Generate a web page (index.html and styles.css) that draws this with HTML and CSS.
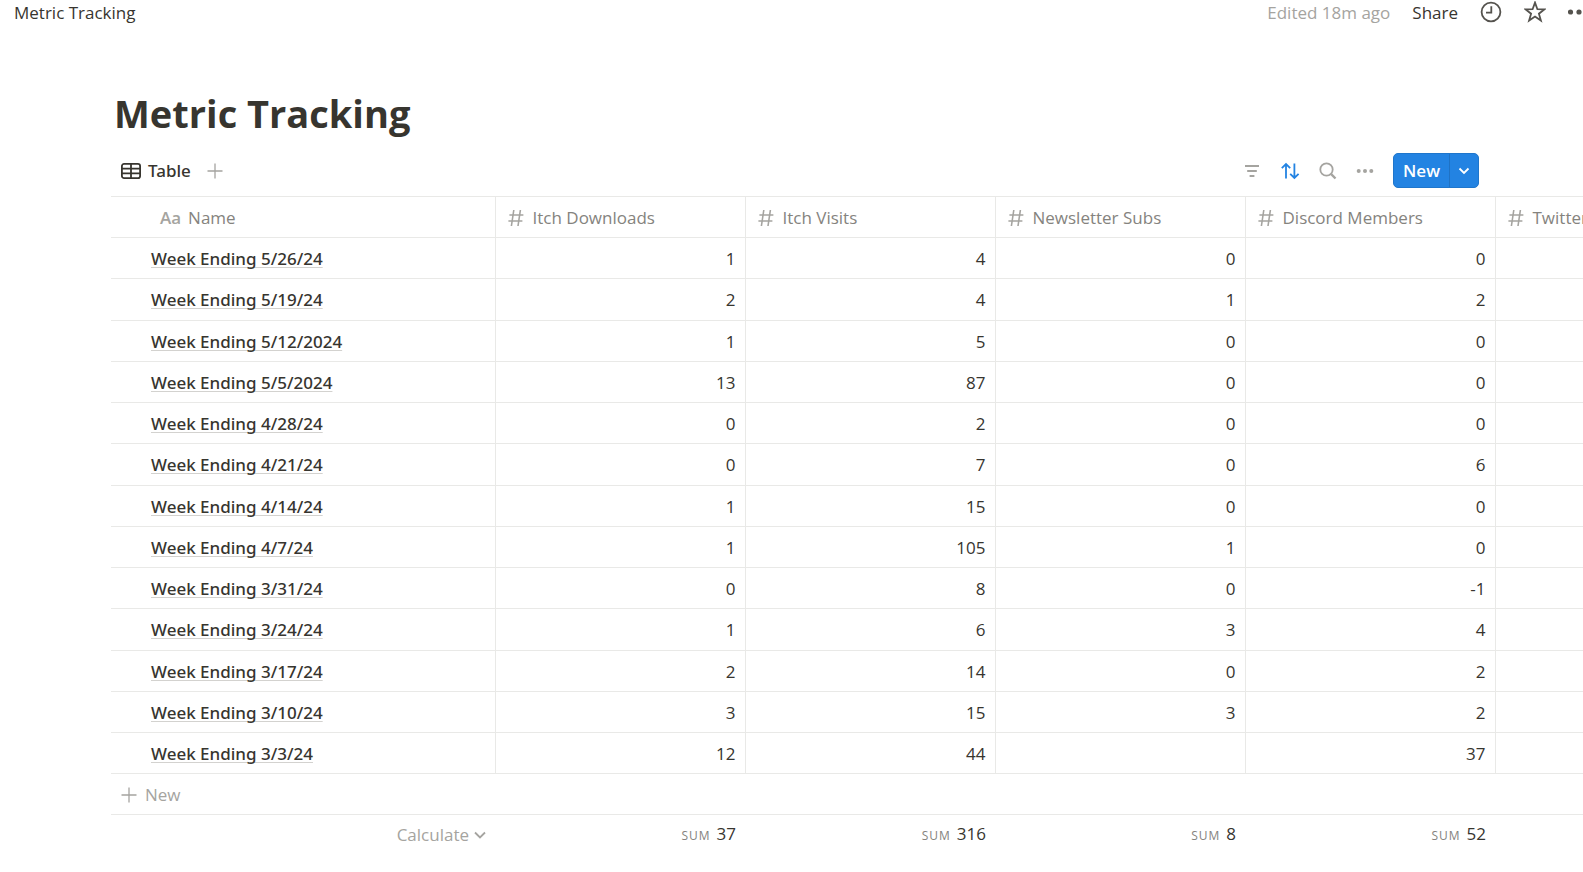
FILE: index.html
```html
<!DOCTYPE html>
<html lang="en">
<head>
    <meta charset="UTF-8">
    <meta name="viewport" content="width=device-width, initial-scale=1.0">
    <title>Metric Tracking</title>
    <link rel="stylesheet" href="styles.css">
</head>
<body>

    <header class="topbar">
        <a class="breadcrumb" href="#">Metric Tracking</a>
        <div class="topbar-actions">
            <span class="edited">Edited 18m ago</span>
            <button class="share">Share</button>
            <button class="top-icon" aria-label="Updates">
                <svg width="22" height="22" viewBox="0 0 22 22"><circle cx="11" cy="11" r="9.4"/><path d="M11.3 5.2v6.4H6"/></svg>
            </button>
            <button class="top-icon" aria-label="Favorite">
                <svg width="22" height="22" viewBox="0 0 22 22"><path d="M11 1.6l2.4 6.6 7 .2-5.5 4.3 2 6.8-5.9-4-5.9 4 2-6.8L1.6 8.4l7-.2z"/></svg>
            </button>
            <button class="top-icon" aria-label="More">
                <svg class="dots" width="22" height="22" viewBox="0 0 22 22"><circle cx="2.5" cy="11" r="2.6"/><circle cx="11" cy="11" r="2.6"/><circle cx="19.5" cy="11" r="2.6"/></svg>
            </button>
        </div>
    </header>

    <main class="page">
        <h1>Metric Tracking</h1>

        <div class="toolbar">
            <div class="views">
                <button class="view-tab">
                    <svg width="20" height="16" viewBox="0 0 20 16"><rect x="0.9" y="0.9" width="18.2" height="14.2" rx="2.2"/><path d="M1 5.6h18M1 10.4h18M10 1v14"/></svg>
                    Table
                </button>
                <button class="add-view" aria-label="Add view">
                    <svg width="16" height="16" viewBox="0 0 16 16"><path d="M8 .5v15M.5 8h15"/></svg>
                </button>
            </div>
            <div class="tools">
                <button class="tool" aria-label="Filter">
                    <svg width="18" height="18" viewBox="0 0 18 18"><path d="M2 4h14M4.2 9h9.6M6.6 14h4.8"/></svg>
                </button>
                <button class="tool tool-active" aria-label="Sort">
                    <svg width="20" height="18" viewBox="0 0 20 18"><path d="M6 16.5V2M1.8 6.2L6 2l4.2 4.2M14.4 1.5V16M10.2 11.8l4.2 4.2 4.2-4.2"/></svg>
                </button>
                <button class="tool" aria-label="Search">
                    <svg width="18" height="18" viewBox="0 0 18 18"><circle cx="7.5" cy="7.5" r="6.2"/><path class="handle" d="M12.2 12.2l4.3 4.3"/></svg>
                </button>
                <button class="tool" aria-label="More options">
                    <svg class="dots" width="18" height="18" viewBox="0 0 18 18"><circle cx="2.7" cy="9" r="2"/><circle cx="9" cy="9" r="2"/><circle cx="15.3" cy="9" r="2"/></svg>
                </button>
                <div class="new-group">
                    <button class="new-button">New</button>
                    <button class="new-menu" aria-label="New options">
                        <svg width="12" height="8" viewBox="0 0 12 8"><path d="M1.5 1.5L6 6l4.5-4.5"/></svg>
                    </button>
                </div>
            </div>
        </div>

        <table class="metrics">
            <colgroup>
                <col class="col-name">
                <col class="col-num">
                <col class="col-num">
                <col class="col-num">
                <col class="col-num">
                <col class="col-num">
            </colgroup>
            <thead>
                <tr>
                    <th><span class="head"><span class="aa">Aa</span>Name</span></th>
                    <th><span class="head"><svg width="16" height="18" viewBox="0 0 16 18"><path d="M5.8 1L3.4 17M12.4 1L10 17M1.4 6h14M.4 12h14"/></svg>Itch Downloads</span></th>
                    <th><span class="head"><svg width="16" height="18" viewBox="0 0 16 18"><path d="M5.8 1L3.4 17M12.4 1L10 17M1.4 6h14M.4 12h14"/></svg>Itch Visits</span></th>
                    <th><span class="head"><svg width="16" height="18" viewBox="0 0 16 18"><path d="M5.8 1L3.4 17M12.4 1L10 17M1.4 6h14M.4 12h14"/></svg>Newsletter Subs</span></th>
                    <th><span class="head"><svg width="16" height="18" viewBox="0 0 16 18"><path d="M5.8 1L3.4 17M12.4 1L10 17M1.4 6h14M.4 12h14"/></svg>Discord Members</span></th>
                    <th><span class="head"><svg width="16" height="18" viewBox="0 0 16 18"><path d="M5.8 1L3.4 17M12.4 1L10 17M1.4 6h14M.4 12h14"/></svg>Twitter</span></th>
                </tr>
            </thead>
            <tbody>
                <tr><td><a href="#">Week Ending 5/26/24</a></td><td>1</td><td>4</td><td>0</td><td>0</td><td></td></tr>
                <tr><td><a href="#">Week Ending 5/19/24</a></td><td>2</td><td>4</td><td>1</td><td>2</td><td></td></tr>
                <tr><td><a href="#">Week Ending 5/12/2024</a></td><td>1</td><td>5</td><td>0</td><td>0</td><td></td></tr>
                <tr><td><a href="#">Week Ending 5/5/2024</a></td><td>13</td><td>87</td><td>0</td><td>0</td><td></td></tr>
                <tr><td><a href="#">Week Ending 4/28/24</a></td><td>0</td><td>2</td><td>0</td><td>0</td><td></td></tr>
                <tr><td><a href="#">Week Ending 4/21/24</a></td><td>0</td><td>7</td><td>0</td><td>6</td><td></td></tr>
                <tr><td><a href="#">Week Ending 4/14/24</a></td><td>1</td><td>15</td><td>0</td><td>0</td><td></td></tr>
                <tr><td><a href="#">Week Ending 4/7/24</a></td><td>1</td><td>105</td><td>1</td><td>0</td><td></td></tr>
                <tr><td><a href="#">Week Ending 3/31/24</a></td><td>0</td><td>8</td><td>0</td><td>-1</td><td></td></tr>
                <tr><td><a href="#">Week Ending 3/24/24</a></td><td>1</td><td>6</td><td>3</td><td>4</td><td></td></tr>
                <tr><td><a href="#">Week Ending 3/17/24</a></td><td>2</td><td>14</td><td>0</td><td>2</td><td></td></tr>
                <tr><td><a href="#">Week Ending 3/10/24</a></td><td>3</td><td>15</td><td>3</td><td>2</td><td></td></tr>
                <tr><td><a href="#">Week Ending 3/3/24</a></td><td>12</td><td>44</td><td></td><td>37</td><td></td></tr>
            </tbody>
            <tfoot>
                <tr class="new-row">
                    <td colspan="6">
                        <button class="add-row">
                            <svg width="16" height="16" viewBox="0 0 16 16"><path d="M8 .5v15M.5 8h15"/></svg>
                            New
                        </button>
                    </td>
                </tr>
                <tr class="sums">
                    <td>
                        <button class="calculate">
                            Calculate
                            <svg width="12" height="8" viewBox="0 0 12 8"><path d="M1 1.5l5 5 5-5"/></svg>
                        </button>
                    </td>
                    <td><span class="label">SUM</span>37</td>
                    <td><span class="label">SUM</span>316</td>
                    <td><span class="label">SUM</span>8</td>
                    <td><span class="label">SUM</span>52</td>
                    <td></td>
                </tr>
            </tfoot>
        </table>
    </main>

</body>
</html>
```

FILE: styles.css
```css
* {
    box-sizing: border-box;
}
body {
    font-family: "Open Sans", "Noto Sans", sans-serif;
    font-size: 17px;
    line-height: 24px;
    color: #37352f;
    background: #fff;
    margin: 0;
    overflow: hidden;
}
button {
    font: inherit;
    color: inherit;
    background: none;
    border: none;
    padding: 0;
    cursor: pointer;
}
a {
    color: inherit;
    text-decoration: none;
}
svg {
    display: block;
    flex: none;
    fill: none;
    stroke: currentColor;
    stroke-width: 1.8;
}
.dots {
    fill: currentColor;
    stroke: none;
}

/* top bar */
.topbar {
    display: flex;
    justify-content: space-between;
    height: 24px;
    padding-left: 14px;
    line-height: 26px;
    overflow: hidden;
}
.topbar-actions {
    display: flex;
    gap: 22px;
    margin-right: -7px;
}
.edited {
    color: #a5a4a0;
}
.share {
    height: 26px;
}
.top-icon {
    height: 24px;
    color: #55534e;
}

/* page */
.page {
    padding: 62px 104px 0 111px;
}
h1 {
    font-size: 38px;
    line-height: 54px;
    font-weight: 700;
    margin: 0;
    padding-left: 3px;
}
.toolbar {
    display: flex;
    justify-content: space-between;
    align-items: center;
    height: 56px;
    padding: 5px 0 0 10px;
}
.views, .tools, .view-tab, .new-group {
    display: flex;
    align-items: center;
}
.views {
    gap: 16px;
}
.view-tab {
    gap: 7px;
    font-family: "Noto Sans", sans-serif;
    font-weight: 500;
}
.add-view {
    color: #a5a4a0;
}
.add-view svg, .add-row svg {
    stroke-width: 1.3;
}
.tools {
    gap: 19px;
    color: #a5a4a0;
}
.tool-active {
    color: #2383e2;
}
.handle {
    stroke-width: 2.4;
}
.new-group {
    height: 35px;
    color: #fff;
    background: #2383e2;
    border: 1px solid #1f76cc;
    border-radius: 5px;
}
.new-button {
    height: 33px;
    padding: 0 9px;
    font-weight: 600;
}
.new-menu {
    height: 33px;
    padding: 0 8px;
    border-left: 1px solid #1f72c4;
}

/* table */
.metrics {
    width: 1634px;
    table-layout: fixed;
    border-collapse: collapse;
}
.col-name {
    width: 384px;
}
.col-num {
    width: 250px;
}
.metrics tr {
    height: 41px;
}
.metrics tbody tr:nth-child(4n+2) {
    height: 42px;
}
.metrics th, .metrics td {
    padding: 1px 9px 0 10px;
    text-align: right;
    border: 1px solid #e9e9e7;
}
.metrics th:first-child, .metrics td:first-child {
    padding-left: 40px;
    text-align: left;
    border-left: none;
}
.metrics th {
    font-weight: 400;
    color: #85837e;
}
.head {
    display: flex;
    align-items: center;
    gap: 9px;
    white-space: nowrap;
}
.head svg {
    color: #a5a4a0;
    stroke-width: 1.6;
    margin-left: 2px;
}
.aa {
    margin: 0 -2px 0 9px;
    font-weight: 600;
    color: #a5a4a0;
}
.metrics tbody a {
    font-family: "Noto Sans", sans-serif;
    font-weight: 500;
    text-decoration: underline 1px #d3d2cf;
    text-decoration-skip-ink: none;
    text-underline-offset: 2px;
}
.metrics tfoot .new-row td {
    padding-left: 10px;
    border-right: none;
}
.metrics .sums td {
    padding-top: 0;
    border: none;
}
.add-row, .calculate {
    display: flex;
    align-items: center;
    gap: 8px;
    color: #a5a4a0;
}
.calculate {
    gap: 5px;
    margin-left: auto;
}
.label {
    margin-right: 6px;
    font-size: 12px;
    letter-spacing: 1px;
    color: #85837e;
}
```
